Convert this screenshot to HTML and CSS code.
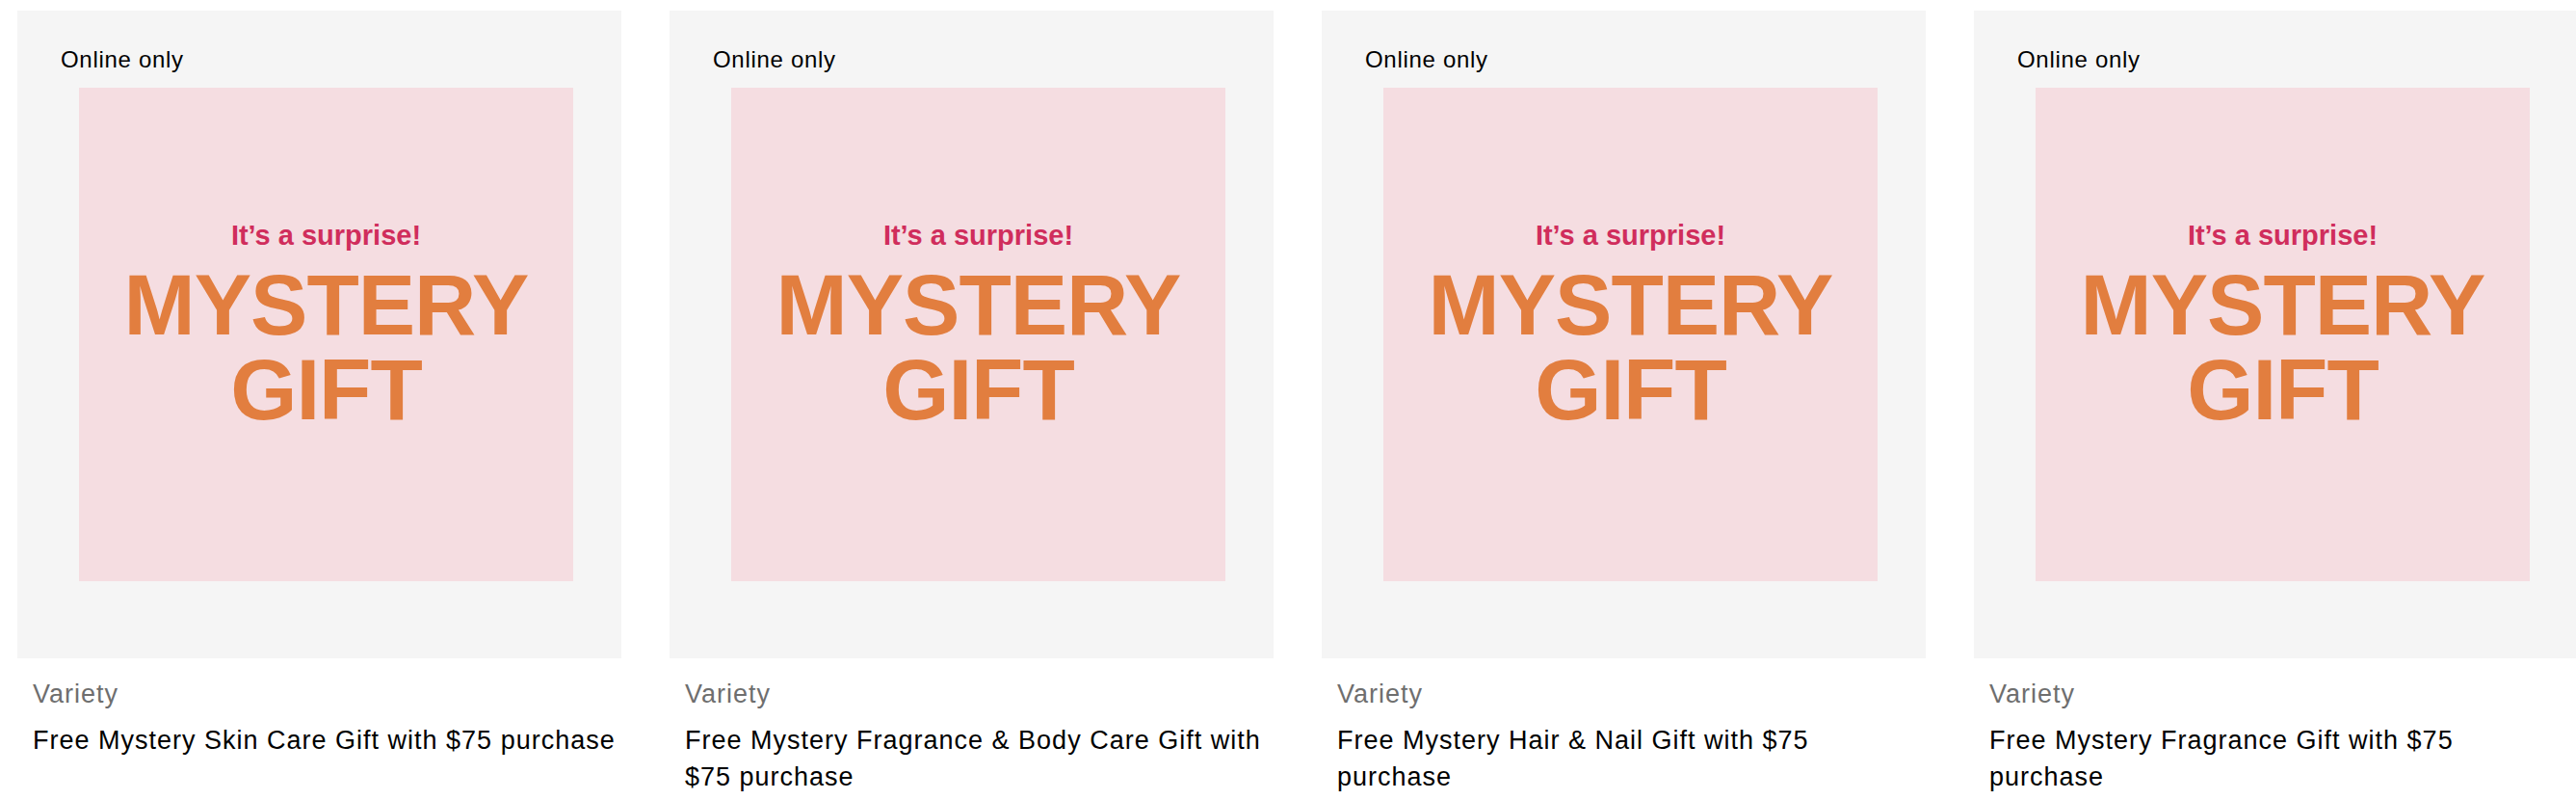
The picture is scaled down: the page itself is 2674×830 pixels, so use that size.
FILE: index.html
```html
<!DOCTYPE html>
<html lang="en">
<head>
    <meta charset="UTF-8">
    <meta name="viewport" content="width=device-width, initial-scale=1.0">
    <title>Mystery Gifts</title>
    <link rel="stylesheet" href="styles.css">
</head>
<body>
    <div class="product-row">

        <div class="product-card">
            <div class="product-media">
                <span class="badge">Online only</span>
                <div class="gift-art">
                    <p class="gift-tagline">It’s a surprise!</p>
                    <p class="gift-title">MYSTERY</p>
                    <p class="gift-title">GIFT</p>
                </div>
            </div>
            <div class="product-info">
                <p class="brand">Variety</p>
                <p class="product-name">Free Mystery Skin Care Gift with $75 purchase</p>
            </div>
        </div>

        <div class="product-card">
            <div class="product-media">
                <span class="badge">Online only</span>
                <div class="gift-art">
                    <p class="gift-tagline">It’s a surprise!</p>
                    <p class="gift-title">MYSTERY</p>
                    <p class="gift-title">GIFT</p>
                </div>
            </div>
            <div class="product-info">
                <p class="brand">Variety</p>
                <p class="product-name">Free Mystery Fragrance &amp; Body Care Gift with $75 purchase</p>
            </div>
        </div>

        <div class="product-card">
            <div class="product-media">
                <span class="badge">Online only</span>
                <div class="gift-art">
                    <p class="gift-tagline">It’s a surprise!</p>
                    <p class="gift-title">MYSTERY</p>
                    <p class="gift-title">GIFT</p>
                </div>
            </div>
            <div class="product-info">
                <p class="brand">Variety</p>
                <p class="product-name">Free Mystery Hair &amp; Nail Gift with $75 purchase</p>
            </div>
        </div>

        <div class="product-card">
            <div class="product-media">
                <span class="badge">Online only</span>
                <div class="gift-art">
                    <p class="gift-tagline">It’s a surprise!</p>
                    <p class="gift-title">MYSTERY</p>
                    <p class="gift-title">GIFT</p>
                </div>
            </div>
            <div class="product-info">
                <p class="brand">Variety</p>
                <p class="product-name">Free Mystery Fragrance Gift with $75 purchase</p>
            </div>
        </div>

    </div>
</body>
</html>
```

FILE: styles.css
```css
body {
    font-family: 'Liberation Sans', Arial, sans-serif;
    margin: 0;
    padding: 0;
    background-color: #ffffff;
    color: #000;
    overflow: hidden;
}

p {
    margin: 0;
}

.product-row {
    display: flex;
    gap: 50px;
    padding: 11px 0 0 18px;
}

.product-card {
    flex: 0 0 627px;
}

.product-media {
    display: flex;
    flex-direction: column;
    align-items: flex-start;
    height: 672px;
    box-sizing: border-box;
    padding: 37px 50px 80px 64px;
    background-color: #f5f5f5;
}

.badge {
    margin-left: -19px;
    margin-bottom: 15px;
    font-size: 24px;
    line-height: 28px;
    letter-spacing: 0.7px;
    color: #000;
}

.gift-art {
    width: 513px;
    height: 512px;
    box-sizing: border-box;
    padding-top: 136px;
    background-color: #f5dde1;
    text-align: center;
}

.gift-tagline {
    font-size: 29px;
    line-height: 34px;
    font-weight: 700;
    color: #d02d5c;
    margin-bottom: 11px;
}

.gift-title {
    height: 88px;
    font-size: 89px;
    line-height: 88px;
    font-weight: 700;
    letter-spacing: -1px;
    color: #e27e3f;
}

.product-info {
    padding: 19px 4px 0 16px;
}

.brand {
    font-size: 27px;
    line-height: 36px;
    letter-spacing: 1px;
    color: #6e6e6e;
}

.product-name {
    margin-top: 11px;
    font-size: 27px;
    line-height: 38px;
    letter-spacing: 1px;
    color: #000;
}
```
